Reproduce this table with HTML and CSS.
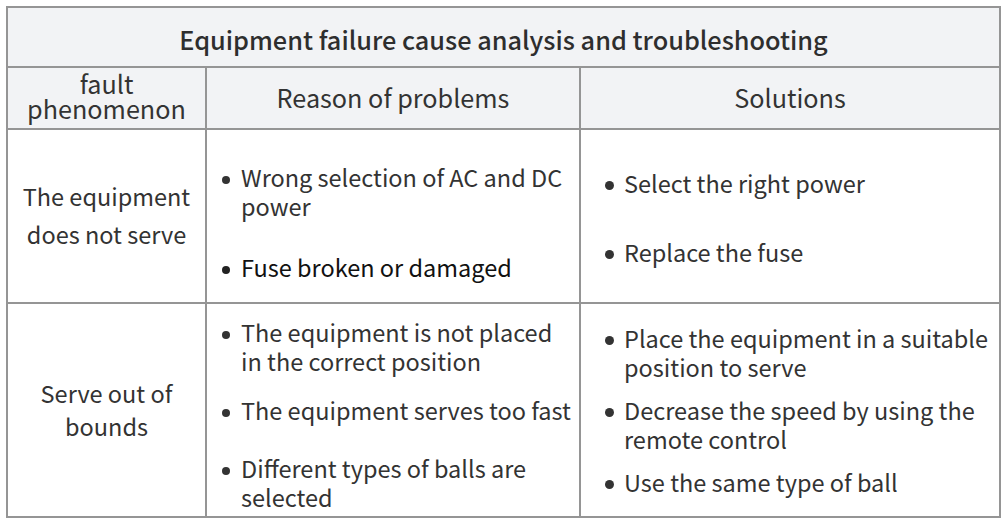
FILE: index.html
```html
<!DOCTYPE html>
<html lang="en">
<head>
<meta charset="utf-8">
<title>Equipment failure cause analysis and troubleshooting</title>
<link rel="stylesheet" href="styles.css">
</head>
<body>
<div class="table">
  <div class="cell title">Equipment failure cause analysis and troubleshooting</div>
  <div class="cell head head-fault"><span>fault</span><span>phenomenon</span></div>
  <div class="cell head">Reason of problems</div>
  <div class="cell head">Solutions</div>

  <div class="cell fault fault-1"><span>The equipment</span><span>does not serve</span></div>
  <div class="cell list reasons reasons-1">
    <div class="item">Wrong selection of AC and DC power</div>
    <div class="item dark">Fuse broken or damaged</div>
  </div>
  <div class="cell list solutions solutions-1">
    <div class="item">Select the right power</div>
    <div class="item">Replace the fuse</div>
  </div>

  <div class="cell fault fault-2"><span>Serve out of</span><span>bounds</span></div>
  <div class="cell list reasons reasons-2">
    <div class="item">The equipment is not placed in the correct position</div>
    <div class="item">The equipment serves too fast</div>
    <div class="item">Different types of balls are selected</div>
  </div>
  <div class="cell list solutions solutions-2">
    <div class="item">Place the equipment in a suitable position to serve</div>
    <div class="item">Decrease the speed by using the remote control</div>
    <div class="item">Use the same type of ball</div>
  </div>
</div>
</body>
</html>
```
FILE: styles.css
```css
html, body {
  margin: 0;
  padding: 0;
  background: #ffffff;
}
body {
  padding: 6px 0 0 6px;
  font-family: "Noto Sans CJK SC", "Noto Sans", sans-serif;
  color: #333333;
}
.table {
  display: grid;
  grid-template-columns: 199px 374px 420px;
  grid-template-rows: 60px 62px 174px 214px;
  width: 995px;
  box-sizing: border-box;
  border-left: 2px solid #959595;
  border-top: 2px solid #959595;
}
.cell {
  box-sizing: border-box;
  border-right: 2px solid #959595;
  border-bottom: 2px solid #959595;
  font-size: 23.5px;
}
.title {
  grid-column: 1 / 4;
  background: #f2f3f5;
  display: flex;
  align-items: center;
  justify-content: center;
  padding-top: 3px;
  font-weight: 500;
  font-size: 25.3px;
  color: #2e2e2e;
}
.head {
  background: #f2f3f5;
  display: flex;
  align-items: center;
  justify-content: center;
  padding-bottom: 2px;
  font-size: 25.2px;
}
.head-fault {
  flex-direction: column;
  line-height: 25px;
  padding-bottom: 5px;
}
.fault {
  display: flex;
  flex-direction: column;
  align-items: center;
  justify-content: center;
  text-align: center;
}
.fault-1 { line-height: 38px; padding-bottom: 2px; }
.fault-2 { line-height: 33px; }
.list {
  display: flex;
  flex-direction: column;
  line-height: 29px;
}
.item {
  position: relative;
}
.item::before {
  content: "";
  position: absolute;
  width: 8px;
  height: 8px;
  border-radius: 50%;
  background: #333333;
  top: 13px;
}
.reasons { padding-left: 34px; padding-right: 1px; }
.reasons .item::before { left: -19px; }
.solutions { padding-left: 43px; padding-right: 1px; }
.solutions .item::before { left: -19px; width: 9px; height: 9px; top: 12px; }
.dark { color: #111111; }
.dark::before { background: #222222; }
.reasons-1 { padding-top: 33px; gap: 32px; }
.solutions-1 { padding-top: 39px; gap: 40px; }
.reasons-2 { padding-top: 14px; }
.reasons-2 .item + .item { margin-top: 20px; }
.reasons-2 .item:last-child { margin-top: 29px; }
.solutions-2 { padding-top: 20px; gap: 14px; }
```
